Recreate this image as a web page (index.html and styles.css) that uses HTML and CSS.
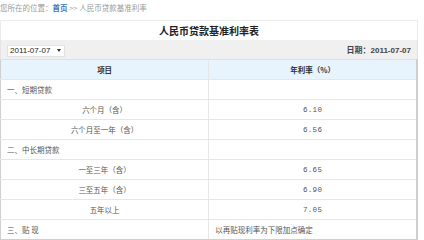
FILE: index.html
```html
<!DOCTYPE html>
<html lang="zh">
<head>
<meta charset="utf-8">
<link rel="stylesheet" href="styles.css">
</head>
<body>
<div class="crumb">您所在的位置：<a class="home">首页</a> <span class="sep">&gt;&gt;</span> 人民币贷款基准利率</div>
<div class="panel">
  <div class="title">人民币贷款基准利率表</div>
  <div class="bar">
    <div class="select"><span>2011-07-07</span><span class="arrow"></span></div>
    <div class="date">日期：2011-07-07</div>
  </div>
  <table class="rates">
    <tr class="head"><th>项目</th><th>年利率（%）</th></tr>
    <tr><td class="cat">一、短期贷款</td><td></td></tr>
    <tr><td class="c">六个月（含）</td><td class="c num">6.10</td></tr>
    <tr><td class="c">六个月至一年（含）</td><td class="c num">6.56</td></tr>
    <tr><td class="cat">二、中长期贷款</td><td></td></tr>
    <tr><td class="c">一至三年（含）</td><td class="c num">6.65</td></tr>
    <tr><td class="c">三至五年（含）</td><td class="c num">6.90</td></tr>
    <tr><td class="c">五年以上</td><td class="c num">7.05</td></tr>
    <tr><td class="cat">三、贴 现</td><td class="cat">以再贴现利率为下限加点确定</td></tr>
  </table>
</div>
</body>
</html>
```
FILE: styles.css
```css
html, body { margin: 0; padding: 0; background: #fff; }
body {
  font-family: "Noto Sans CJK SC", "Noto Sans", sans-serif;
  color: #444;
  width: 424px;
  height: 240px;
  overflow: hidden;
}
.crumb {
  font-size: 7.5px;
  line-height: 9px;
  color: #999;
  padding: 3px 0 0 0;
  height: 17px;
  box-sizing: border-box;
  white-space: nowrap;
}
.crumb .home { color: #3a78b8; font-weight: bold; }
.crumb .sep { color: #aaa; }
.panel {
  width: 418px;
  margin-top: 3px;
}
.title {
  height: 19px;
  border: 1px solid #ececec;
  border-bottom: none;
  text-align: center;
  font-size: 10px;
  font-weight: bold;
  line-height: 19px;
  color: #222;
}
.bar {
  height: 19px;
  background: #f0f0f0;
  border-left: 1px solid #e4e4e4;
  border-right: 1px solid #e4e4e4;
  display: flex;
  align-items: center;
  justify-content: space-between;
  padding: 0 6px 0 6px;
}
.select {
  display: flex;
  align-items: center;
  gap: 7px;
  background: #fff;
  border: 1px solid #e2e2e2;
  height: 10px;
  padding: 0 3px 0 2px;
  font-family: "Liberation Sans", sans-serif;
  font-size: 8px;
  color: #222;
  margin-top: 2px;
}
.arrow {
  width: 0; height: 0;
  border-left: 2.5px solid transparent;
  border-right: 2.5px solid transparent;
  border-top: 3px solid #333;
}
.date {
  font-size: 8px;
  font-weight: bold;
  color: #444;
  font-family: "Liberation Sans", "Noto Sans CJK SC", sans-serif;
}
.rates {
  width: 418px;
  border-collapse: collapse;
  table-layout: fixed;
  border-left: 1px solid #cfcfcf;
  border-right: 2px solid #cfcfcf;
  border-bottom: 2px solid #cfcfcf;
}
.rates th, .rates td {
  width: 50%;
  height: 20px;
  padding: 0 6px;
  font-size: 7.5px;
  border-top: 1px solid #e6e6e6;
  border-right: 1px solid #e6e6e6;
  color: #555;
  box-sizing: border-box;
}
.rates th {
  background: #e8f4fd;
  color: #333;
  font-weight: bold;
  height: 20px;
  border-top: 1px solid #e0e0e0;
}
.rates .cat { text-align: left; }
.rates .c { text-align: center; }
.rates .num { font-family: "Liberation Mono", monospace; letter-spacing: 0.3px; font-size: 7.5px; }
```
